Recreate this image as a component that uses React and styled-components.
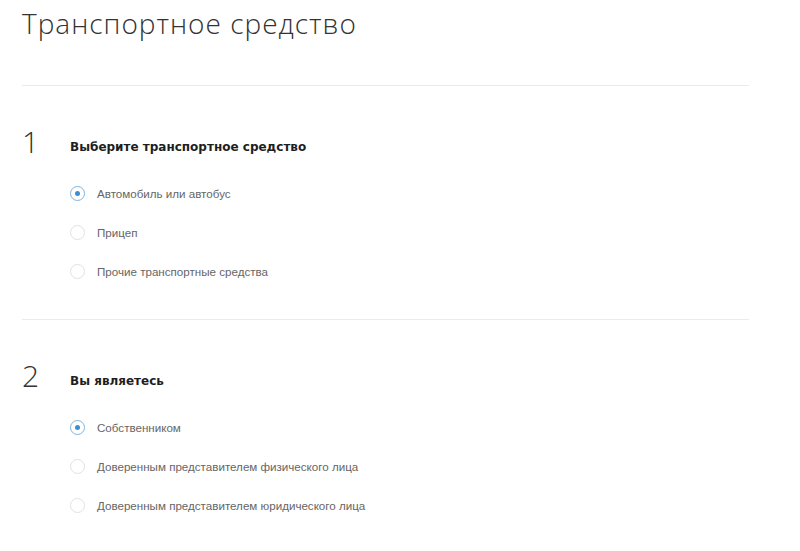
import React, { useState } from "react";
import styled, { createGlobalStyle } from "styled-components";

const GlobalStyle = createGlobalStyle`
  body {
    margin: 0;
    background: #fff;
    font-family: "Liberation Sans", Arial, sans-serif;
  }
`;

const Page = styled.div`
  width: 727px;
  padding-left: 22px;
`;

const Title = styled.h1`
  margin: 3px 0 0;
  font-family: "Open Sans", sans-serif;
  font-weight: 300;
  font-size: 28px;
  letter-spacing: 1px;
  line-height: 40px;
  color: #333;
`;

const Divider = styled.hr`
  margin: ${p => p.$top || 0}px 0 0;
  border: 0;
  border-top: 1px solid #ebebeb;
`;

const Section = styled.section`
  padding: 41px 0 28px;
`;

const Header = styled.div`
  display: flex;
  align-items: baseline;
  height: 30px;
`;

const Number = styled.span`
  width: 48px;
  font-family: "Open Sans", sans-serif;
  font-weight: 300;
  font-size: 30px;
  line-height: 30px;
  color: #333;
`;

const Heading = styled.h2`
  position: relative;
  top: -2px;
  margin: 0;
  font-family: "DejaVu Sans", sans-serif;
  font-weight: bold;
  font-size: 12px;
  line-height: 30px;
  color: #1e1e1e;
`;

const Options = styled.div`
  margin: 17px 0 0 48px;
  display: flex;
  flex-direction: column;
`;

const Option = styled.label`
  display: flex;
  align-items: center;
  gap: 12px;
  height: 39px;
  cursor: pointer;
  font-size: 11.6px;
  color: #666;
`;

const Radio = styled.span`
  box-sizing: border-box;
  width: 15px;
  height: 15px;
  border-radius: 50%;
  border: ${p => (p.$checked ? "1.5px solid #7fb4df" : "1px solid #e2e2e2")};
  display: flex;
  align-items: center;
  justify-content: center;
  &::after {
    content: "";
    width: 5px;
    height: 5px;
    border-radius: 50%;
    background: ${p => (p.$checked ? "#3d8fd0" : "transparent")};
  }
`;

const sections = [
  {
    n: 1,
    title: "Выберите транспортное средство",
    options: ["Автомобиль или автобус", "Прицеп", "Прочие транспортные средства"]
  },
  {
    n: 2,
    title: "Вы являетесь",
    options: [
      "Собственником",
      "Доверенным представителем физического лица",
      "Доверенным представителем юридического лица"
    ]
  }
];

function Step({ step }) {
  const [value, setValue] = useState(0);
  return (
    <Section>
      <Header>
        <Number>{step.n}</Number>
        <Heading>{step.title}</Heading>
      </Header>
      <Options>
        {step.options.map((o, i) => (
          <Option key={o} onClick={() => setValue(i)}>
            <Radio $checked={value === i} />
            {o}
          </Option>
        ))}
      </Options>
    </Section>
  );
}

export default function App() {
  return (
    <Page>
      <GlobalStyle />
      <Title>Транспортное средство</Title>
      <Divider $top={42} />
      {sections.map((s, i) => (
        <React.Fragment key={s.n}>
          <Step step={s} />
          {i < sections.length - 1 && <Divider />}
        </React.Fragment>
      ))}
    </Page>
  );
}
